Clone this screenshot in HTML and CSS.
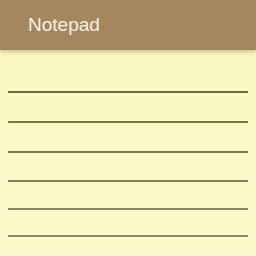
FILE: index.html
```html
<!DOCTYPE html>
<html>
<head>
<meta charset="utf-8">
<link rel="stylesheet" href="styles.css">
</head>
<body>
<div class="app">
  <header class="bar"><span class="title">Notepad</span></header>
  <div class="paper">
    <div class="rule r1"></div>
    <div class="rule r2"></div>
    <div class="rule r3"></div>
    <div class="rule r4"></div>
    <div class="rule r5"></div>
    <div class="rule r6"></div>
  </div>
</div>
</body>
</html>
```
FILE: styles.css
```css
html, body { margin: 0; padding: 0; }
body { width: 256px; height: 256px; overflow: hidden; background: #fbf7c6; }
.app { display: flex; flex-direction: column; width: 256px; height: 256px; }
.bar {
  height: 50px;
  background: #a4875f;
  display: flex;
  align-items: center;
  padding-left: 28px;
  box-sizing: border-box;
  box-shadow: 0 2px 4px rgba(120, 100, 60, 0.35);
  position: relative;
  z-index: 1;
}
.title {
  font-family: "Liberation Sans", Arial, sans-serif;
  font-size: 19px;
  color: #f6f1e2;
  margin-top: -1px;
}
.paper {
  flex: 1;
  background: linear-gradient(#fbf7c0, #fcf9cc);
  display: flex;
  flex-direction: column;
  padding: 0 8px;
}
.rule { height: 2px; background: #7c7848; }
.r1 { margin-top: 41px; background: #6f6b3c; }
.r2 { margin-top: 28px; background: #7a7546; }
.r3 { margin-top: 28px; background: #7e7a4c; }
.r4 { margin-top: 27px; background: #85815a; }
.r5 { margin-top: 26px; background: #8a8660; }
.r6 { margin-top: 25px; background: #8e8a66; }
```
